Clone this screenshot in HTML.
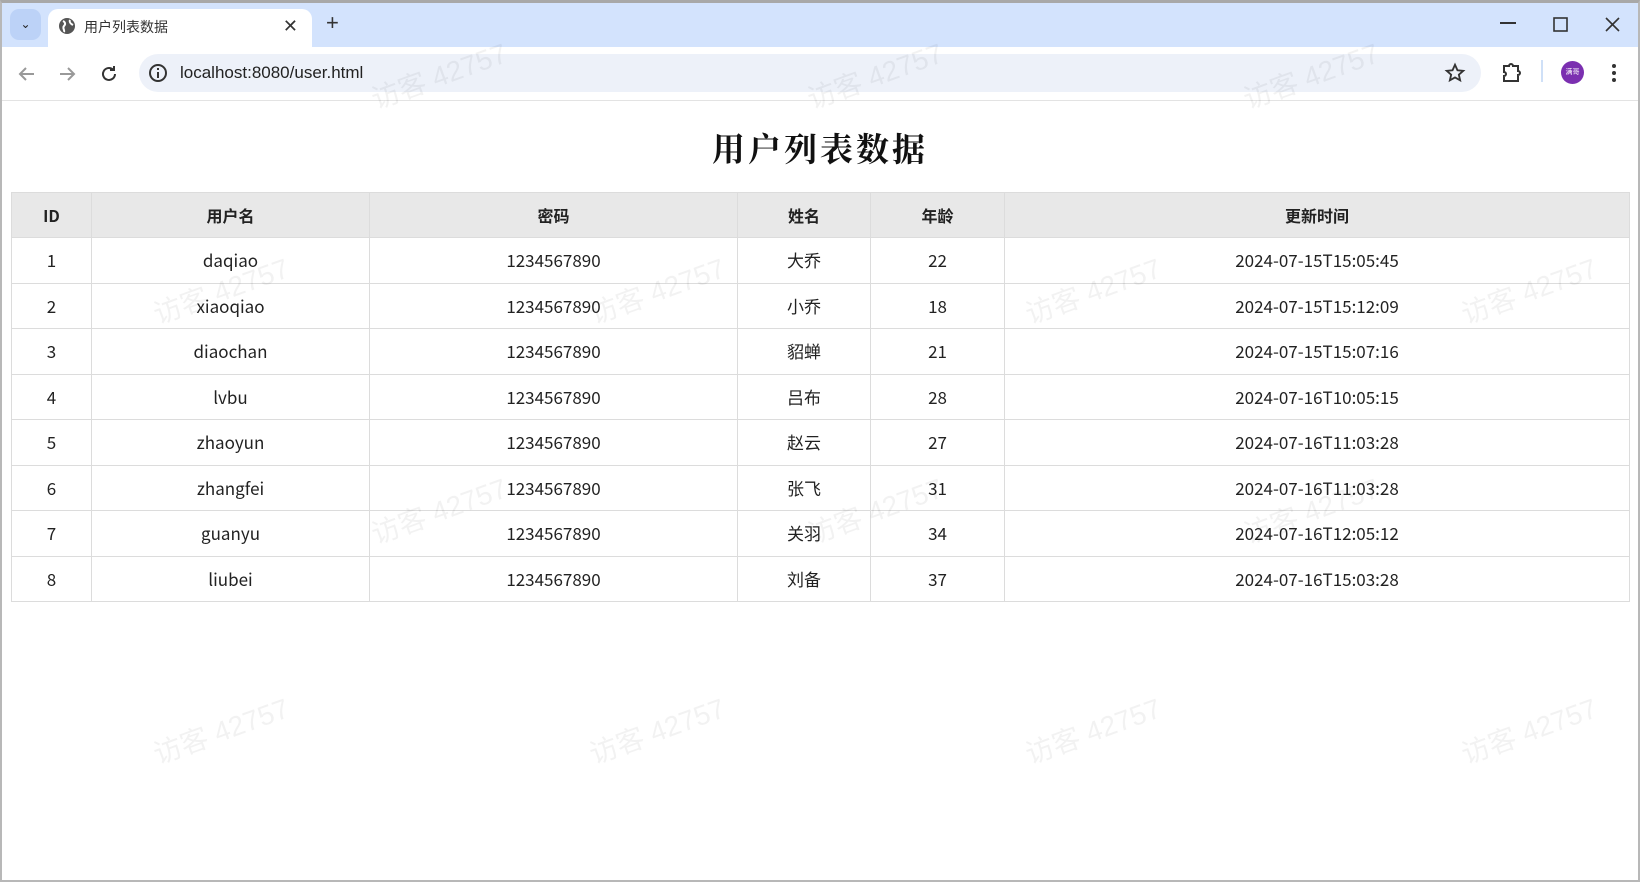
<!DOCTYPE html>
<html><head><meta charset="utf-8"><style>
*{box-sizing:border-box;margin:0;padding:0}
body{width:1640px;height:882px;overflow:hidden;background:#fff;font-family:"Liberation Sans","Noto Sans CJK SC",sans-serif;position:relative}
.frame{position:absolute;inset:0;border:2px solid #b8b8b8;border-top:3px solid #a8a8a8;pointer-events:none;z-index:9}
.tabs{position:absolute;left:0;top:0;width:1640px;height:47px;background:#d3e3fd}
.tabbtn{position:absolute;left:10px;top:9px;width:31px;height:31px;border-radius:9px;background:#bcd2f7;font-size:12px;text-align:center;line-height:31px;color:#222}
.tab{position:absolute;left:48px;top:9px;width:264px;height:38px;background:#fff;border-radius:10px 10px 0 0;font-size:14px;color:#333}
.tab .t{position:absolute;left:36px;top:8px;font-family:"Noto Sans CJK SC",sans-serif}
.tab .x{position:absolute;right:14px;top:7px;font-size:18px}
.plus{position:absolute;left:326px;top:10px;font-size:22px;color:#333}
.tb{position:absolute;left:0;top:47px;width:1640px;height:54px;background:#fff;border-bottom:1px solid #e3e3e3}
.addr{position:absolute;left:139px;top:7px;width:1342px;height:38px;border-radius:19px;background:#edf1f9}
.url{position:absolute;left:180px;top:16px;font-size:17px;color:#222}
h1{position:absolute;left:0;width:1640px;top:124px;text-align:center;font-family:"Noto Serif CJK SC",serif;font-size:33px;font-weight:bold;letter-spacing:3px;color:#111}
table{position:absolute;left:11px;top:192px;width:1619px;border-collapse:collapse;font-size:17px;color:#222;font-family:"Noto Sans CJK SC",sans-serif}
td,th{border:1px solid #dcdcdc;height:45.5px;text-align:center;padding:0;line-height:20px}
th{background:#e8e8e8;font-weight:bold;font-size:16px;height:45px}
.wm{position:absolute;color:rgba(0,0,0,0.05);font-size:28px;transform:rotate(-20deg);white-space:nowrap;font-family:"Liberation Sans","Noto Sans CJK SC",sans-serif}
svg{position:absolute}
</style></head><body>
<div class="tabs">
<div class="tabbtn">⌄</div>
<div class="tab"><svg style="left:10px;top:8px" width="18" height="18" viewBox="0 0 18 18"><circle cx="9" cy="9" r="8" fill="#555"/><path d="M5 4c2 1 3 3 1 5s1 4 0 6M12 3c-1 2 1 4 3 5" stroke="#fff" stroke-width="2" fill="none"/></svg><span class="t">用户列表数据</span><span class="x">✕</span></div>
<div class="plus">+</div>
<svg style="left:1500px;top:22px" width="16" height="4"><rect width="16" height="2" fill="#333"/></svg>
<svg style="left:1553px;top:17px" width="15" height="15"><rect x="1" y="1" width="13" height="13" fill="none" stroke="#333" stroke-width="1.6"/></svg>
<svg style="left:1605px;top:17px" width="15" height="15"><path d="M1 1L14 14M14 1L1 14" stroke="#333" stroke-width="1.6"/></svg>
</div>
<div class="tb">
<svg style="left:17px;top:17px" width="20" height="20"><path d="M17 10H3M9 4L3 10l6 6" stroke="#999" stroke-width="2" fill="none"/></svg>
<svg style="left:57px;top:17px" width="20" height="20"><path d="M3 10h14M11 4l6 6-6 6" stroke="#999" stroke-width="2" fill="none"/></svg>
<svg style="left:99px;top:17px" width="20" height="20"><path d="M16 10a6 6 0 1 1-2-4.5M15 2v4h-4" stroke="#333" stroke-width="2" fill="none"/></svg>
<div class="addr"></div>
<svg style="left:148px;top:16px" width="20" height="20"><circle cx="10" cy="10" r="8" fill="none" stroke="#333" stroke-width="2"/><rect x="9" y="9" width="2" height="6" fill="#333"/><rect x="9" y="5" width="2" height="2" fill="#333"/></svg>
<div class="url">localhost:8080/user.html</div>
<svg style="left:1444px;top:15px" width="22" height="22" viewBox="0 0 24 24"><path d="M12 3l2.7 6 6.3.6-4.8 4.2 1.4 6.2L12 16.8 6.4 20l1.4-6.2L3 9.6 9.3 9z" fill="none" stroke="#333" stroke-width="2"/></svg>
<svg style="left:1501px;top:14px" width="22" height="24" viewBox="0 0 22 24"><path d="M3 5h5a2 2 0 0 1 4 0h5v5a2 2 0 0 1 0 4v6H3v-5a2 2 0 0 0 0-4z" fill="none" stroke="#333" stroke-width="2"/></svg>
<div style="position:absolute;left:1541px;top:13px;width:2px;height:22px;background:#cfe0f7"></div>
<div style="position:absolute;left:1561px;top:14px;width:23px;height:23px;border-radius:50%;background:#7b2fb0;color:#fff;font-size:7px;text-align:center;line-height:23px">满哥</div>
<svg style="left:1611px;top:16px" width="6" height="20"><circle cx="3" cy="3" r="2" fill="#333"/><circle cx="3" cy="10" r="2" fill="#333"/><circle cx="3" cy="17" r="2" fill="#333"/></svg>
</div>
<h1>用户列表数据</h1>
<table>
<colgroup><col style="width:80px"><col style="width:278px"><col style="width:368px"><col style="width:133px"><col style="width:134px"><col></colgroup>
<tr><th>ID</th><th>用户名</th><th>密码</th><th>姓名</th><th>年龄</th><th>更新时间</th></tr>
<tr><td>1</td><td>daqiao</td><td>1234567890</td><td>大乔</td><td>22</td><td>2024-07-15T15:05:45</td></tr>
<tr><td>2</td><td>xiaoqiao</td><td>1234567890</td><td>小乔</td><td>18</td><td>2024-07-15T15:12:09</td></tr>
<tr><td>3</td><td>diaochan</td><td>1234567890</td><td>貂蝉</td><td>21</td><td>2024-07-15T15:07:16</td></tr>
<tr><td>4</td><td>lvbu</td><td>1234567890</td><td>吕布</td><td>28</td><td>2024-07-16T10:05:15</td></tr>
<tr><td>5</td><td>zhaoyun</td><td>1234567890</td><td>赵云</td><td>27</td><td>2024-07-16T11:03:28</td></tr>
<tr><td>6</td><td>zhangfei</td><td>1234567890</td><td>张飞</td><td>31</td><td>2024-07-16T11:03:28</td></tr>
<tr><td>7</td><td>guanyu</td><td>1234567890</td><td>关羽</td><td>34</td><td>2024-07-16T12:05:12</td></tr>
<tr><td>8</td><td>liubei</td><td>1234567890</td><td>刘备</td><td>37</td><td>2024-07-16T15:03:28</td></tr>
</table>
<div class="wm" style="left:368px;top:55px">访客 42757</div>
<div class="wm" style="left:804px;top:55px">访客 42757</div>
<div class="wm" style="left:1240px;top:55px">访客 42757</div>
<div class="wm" style="left:150px;top:270px">访客 42757</div>
<div class="wm" style="left:586px;top:270px">访客 42757</div>
<div class="wm" style="left:1022px;top:270px">访客 42757</div>
<div class="wm" style="left:1458px;top:270px">访客 42757</div>
<div class="wm" style="left:368px;top:490px">访客 42757</div>
<div class="wm" style="left:804px;top:490px">访客 42757</div>
<div class="wm" style="left:1240px;top:490px">访客 42757</div>
<div class="wm" style="left:150px;top:710px">访客 42757</div>
<div class="wm" style="left:586px;top:710px">访客 42757</div>
<div class="wm" style="left:1022px;top:710px">访客 42757</div>
<div class="wm" style="left:1458px;top:710px">访客 42757</div>
<div class="frame"></div>
</body></html>
